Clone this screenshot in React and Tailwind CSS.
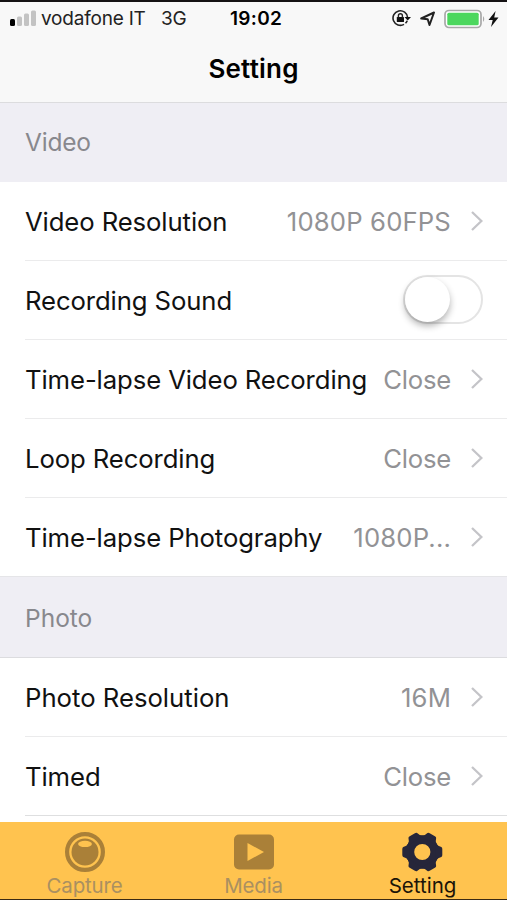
function Chevron() {
  return (
    <svg className="h-5 w-3 shrink-0" viewBox="0 0 12 20" fill="none" stroke="#c4c4c8" strokeWidth="2.3">
      <path d="M1 1 L10.4 10 L1 19" />
    </svg>
  );
}

function Row({ label, value, toggle, last, strong }) {
  const line = last ? "border-transparent" : strong ? "border-[#dedfe0]" : "border-[#ebebec]";
  return (
    <div className="h-[79px] shrink-0 pl-[25px]">
      <div className={`flex h-full items-center border-b pr-6 ${line}`}>
        <span className={`whitespace-nowrap pt-[2px] text-[25.7px] text-[#111] ${label === "Photo Resolution" ? "tracking-[0px]" : "tracking-[-0.1px]"}`}>{label}</span>
        <span className={`ml-auto whitespace-nowrap pt-[2px] text-[25.7px] text-[#929295] ${value === "Close" ? "tracking-[-0.25px]" : "tracking-[0.15px]"}`}>{value}</span>
        {toggle ? (
          <div role="switch" aria-checked="false" className="mb-px h-[49px] w-[80px] shrink-0 rounded-full border-2 border-[#e4e4e4] bg-white">
            <div className="h-[45px] w-[45px] rounded-full bg-white shadow-[0_4px_7px_rgba(0,0,0,0.3)]" />
          </div>
        ) : (
          <div className="ml-5 flex"><Chevron /></div>
        )}
      </div>
    </div>
  );
}

function Tab({ label, color, children }) {
  return (
    <div className="flex flex-1 flex-col items-center pt-[9px]">
      {children}
      <span className={`text-[20.5px] leading-[25px] ${color}`}>{label}</span>
    </div>
  );
}

export default function App() {
  return (
    <div className="flex h-[900px] w-[507px] flex-col overflow-hidden border-t-[2px] border-[#151214] bg-white font-['Inter',sans-serif]">
      <header className="flex h-[101px] shrink-0 flex-col border-b border-[#dcdcde] bg-[#f8f8f8]">
        <div className="flex h-[33px] items-center text-[19px] text-[#222]">
          <svg className="ml-[10px] mt-[-2px] h-4 w-[26px]" viewBox="0 0 26 16">
            <rect x="0" y="9" width="5" height="7" rx="1.5" fill="#000" />
            <rect x="7" y="6.500" width="5" height="9.500" rx="1.5" fill="#c3c3c3" />
            <rect x="14" y="3.500" width="5" height="12.500" rx="1.5" fill="#c3c3c3" />
            <rect x="21" y="0.500" width="5" height="15.500" rx="1.5" fill="#c3c3c3" />
          </svg>
          <span className="ml-[5px] w-[120px] whitespace-nowrap pt-[2px] tracking-[-0.2px]">vodafone IT</span>
          <span className="w-[69px] pt-[2px] tracking-[-0.3px]">3G</span>
          <span className="pt-[2px] font-semibold tracking-[0.3px] text-black">19:02</span>
          <svg className="ml-auto h-5 w-[20px]" viewBox="1 1 20 20" fill="none" stroke="#222" strokeWidth="1.6">
            <path d="M13 16.400 A7.300 7.300 0 1 1 16.600 9.500" />
            <path d="M14.500 15.300 A7.300 7.300 0 0 0 16.200 12.700" />
            <path d="M13.500 9 H20 L16.700 12.500 Z" fill="#111" stroke="none" />
            <rect x="5.800" y="8.900" width="7.200" height="5.200" rx=".6" fill="#111" stroke="none" />
            <path d="M7.400 9.500 V7.800 A2 2 0 0 1 11.400 7.800 V9.500" strokeWidth="1.4" />
          </svg>
          <svg className="ml-[8px] mr-px h-4 w-4" viewBox="0.5 0 16 16" fill="none" stroke="#222" strokeWidth="2" strokeLinejoin="round">
            <path d="M14.500 1.500 L10 14 L8.200 8.300 L1.700 7.500 Z" />
          </svg>
          <svg className="ml-[7px] h-5 w-[42px]" viewBox="0 0 42 20">
            <rect x="1" y="1.5" width="36" height="17" rx="4" fill="#fff" stroke="#a8a8a8" strokeWidth="1.7" />
            <rect x="3.3" y="3.8" width="31.4" height="12.4" rx="1.5" fill="#4cd75e" />
            <path d="M39 7 Q41.5 10 39 13 Z" fill="#a8a8a8" />
          </svg>
          <svg className="ml-[2px] mr-[8px] h-4 w-[11px]" viewBox="0 0 11 16">
            <path d="M7.6 0 L0.5 9 H4.7 L3 16 L10.5 6.6 H6.2 Z" fill="#111" />
          </svg>
        </div>
        <h1 className="text-center text-[26px] font-semibold leading-[67px] tracking-[0.2px] text-black">Setting</h1>
      </header>
      <main className="flex min-h-0 flex-1 flex-col overflow-hidden">
        <h2 className="flex h-[79px] shrink-0 items-center bg-[#efeef4] pl-[25px] text-[24.5px] tracking-[-0.2px] text-[#88888d]">Video</h2>
        <Row label="Video Resolution" value="1080P 60FPS" />
        <Row label="Recording Sound" toggle />
        <Row label="Time-lapse Video Recording" value="Close" />
        <Row label="Loop Recording" value="Close" />
        <Row label="Time-lapse Photography" value="1080P..." last />
        <h2 className="-mt-px flex h-[82px] shrink-0 items-center border-y border-b-[#dcdcdf] border-t-[#e5e5e8] bg-[#efeef4] pl-[25px] pt-[2px] text-[24.5px] text-[#88888d]">Photo</h2>
        <Row label="Photo Resolution" value="16M" />
        <Row label="Timed" value="Close" strong />
      </main>
      <nav className="flex h-[78px] shrink-0 border-b border-[#3b2b13] bg-[#ffc34f]">
        <Tab label="Capture" color="text-[#aa9061] tracking-[-0.2px]">
          <svg className="h-[42px] w-[42px]" viewBox="0 0 42 42" fill="none" stroke="#aa8038">
            <circle cx="21" cy="21" r="17.9" strokeWidth="4.2" />
            <circle cx="21" cy="21" r="13.500" fill="#aa8038" stroke="none" />
            <ellipse cx="21" cy="12.900" rx="6.9" ry="3.200" fill="#ffc34f" stroke="none" />
          </svg>
        </Tab>
        <Tab label="Media" color="text-[#aa9061] tracking-[-0.2px]">
          <svg className="h-[42px] w-[42px]" viewBox="0 0 42 42">
            <rect x="1" y="3.5" width="40" height="35" rx="5" fill="#aa8038" />
            <path d="M14.5 12 V30 L31 21 Z" fill="#ffc34f" />
          </svg>
        </Tab>
        <Tab label="Setting" color="text-[#1b1408] tracking-[0px]">
          <svg className="h-[42px] w-[42px]" viewBox="-20.3 -21 42 42" fill="#26263a">
            <circle r="12.3" fill="none" stroke="#26263a" strokeWidth="8.400" />
            {[0, 60, 120, 180, 240, 300].map((angle) => (
              <path key={angle} transform={`rotate(${angle})`} d="M13 -9.500 L16 -6.300 L19 -5 Q20 -4.500 20 -3 V3 Q20 4.500 19 5 L16 6.300 L13 9.500 Z" />
            ))}
          </svg>
        </Tab>
      </nav>
    </div>
  );
}
